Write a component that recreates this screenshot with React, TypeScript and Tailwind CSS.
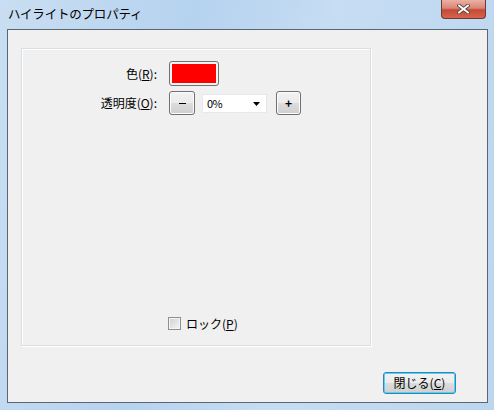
import React from "react";

const font = { fontFamily: '"Noto Sans CJK JP", "Noto Sans", sans-serif' };

function VistaButton({ children, className = "" }: { children: React.ReactNode; className?: string }) {
  return (
    <div
      className={`flex items-center justify-center rounded-[3px] border border-[#707070] bg-[linear-gradient(to_bottom,#f2f2f2_0%,#ebebeb_49%,#dddddd_50%,#cfcfcf_100%)] shadow-[inset_0_0_0_1px_#fcfcfc] text-[12px] text-black ${className}`}
    >
      {children}
    </div>
  );
}

export default function App() {
  return (
    <div
      className="w-[494px] h-[410px] overflow-hidden bg-[linear-gradient(100deg,#c9def2_0%,#b5d2ef_35%,#c6ddf3_60%,#bcd6ef_100%)] flex flex-col"
      style={font}
    >
      {/* title bar */}
      <div className="h-[29px] flex items-start pl-[8px] pr-[8px] relative">
        <span className="mt-[6px] text-[12.5px] leading-[16px] text-black tracking-[-0.2px]">
          ハイライトのプロパティ
        </span>
        <div className="ml-auto w-[45px] h-[19px] rounded-b-[4px] border border-t-0 border-[#6b3a33] bg-[linear-gradient(to_bottom,#eab0a4_0%,#dc8676_45%,#c54a35_55%,#d6644d_100%)] flex items-center justify-center">
          <svg width="13" height="10" viewBox="0 0 13 10">
            <path d="M2 1.5 L11 8.5 M11 1.5 L2 8.5" stroke="#5a4540" strokeWidth="3.6" strokeLinecap="square" />
            <path d="M2 1.5 L11 8.5 M11 1.5 L2 8.5" stroke="#ffffff" strokeWidth="1.8" strokeLinecap="square" />
          </svg>
        </div>
      </div>

      {/* client area */}
      <div className="ml-[7px] mr-[6px] mb-[7px] flex-1 border border-[#5c6670] bg-[#f0f0f0] flex flex-col pl-[13px] pt-[18px] pr-[116px]">
        <div className="h-[298px] border border-[#d5dfe5] shadow-[inset_1px_1px_0_#ffffff,1px_1px_0_#ffffff] flex flex-col pt-[12px] pb-[15px]">
          <div className="flex items-center h-[25px]">
            <div className="w-[136px] text-right text-[12px] leading-none pr-[1px]">
              色(<span className="underline">R</span>):
            </div>
            <div className="ml-[11px] w-[50px] h-[25px] rounded-[3px] border border-[#707070] bg-[#f4f4f4] p-[2px]">
              <div className="w-full h-full bg-[#ff0000]" />
            </div>
          </div>
          <div className="flex items-center h-[24px] mt-[5px]">
            <div className="w-[136px] text-right text-[12px] leading-none pr-[1px]">
              透明度(<span className="underline">O</span>):
            </div>
            <VistaButton className="ml-[11px] w-[26px] h-[24px]">
              <span className="block w-[7px] h-[1.5px] bg-black mt-[1px]" />
            </VistaButton>
            <div className="ml-[7px] w-[65px] h-[19px] bg-white border border-[#e3e9ef] flex items-center pl-[4px] pr-[6px] text-[11px]">
              <span className="tracking-[-0.5px]">0%</span>
              <svg className="ml-auto mt-[1px]" width="7" height="4" viewBox="0 0 7 4">
                <path d="M0 0 H7 L3.5 4 Z" fill="#000" />
              </svg>
            </div>
            <VistaButton className="ml-[9px] w-[25px] h-[24px]">
              <span className="text-[12px] leading-none font-bold">+</span>
            </VistaButton>
          </div>

          <div className="mt-auto flex items-center pl-[146px]">
            <div className="w-[13px] h-[13px] border border-[#8e8f8f] bg-[linear-gradient(135deg,#cbcfd5_0%,#f6f6f6_100%)] shadow-[inset_0_0_0_1px_#f4f4f4]" />
            <span className="ml-[5px] text-[12px] leading-none">
              ロック(<span className="underline">P</span>)
            </span>
          </div>
        </div>

        <div className="flex justify-end mt-[26px] mr-[-85px]">
          <div className="w-[73px] h-[22px] rounded-[3px] border border-[#3c7fb1] shadow-[inset_0_0_0_1px_#48d7fb] bg-[linear-gradient(to_bottom,#f2f2f2_0%,#ebebeb_49%,#dddddd_50%,#cfcfcf_100%)] flex items-center justify-center text-[12px]">
            閉じる(<span className="underline">C</span>)
          </div>
        </div>
      </div>
    </div>
  );
}
